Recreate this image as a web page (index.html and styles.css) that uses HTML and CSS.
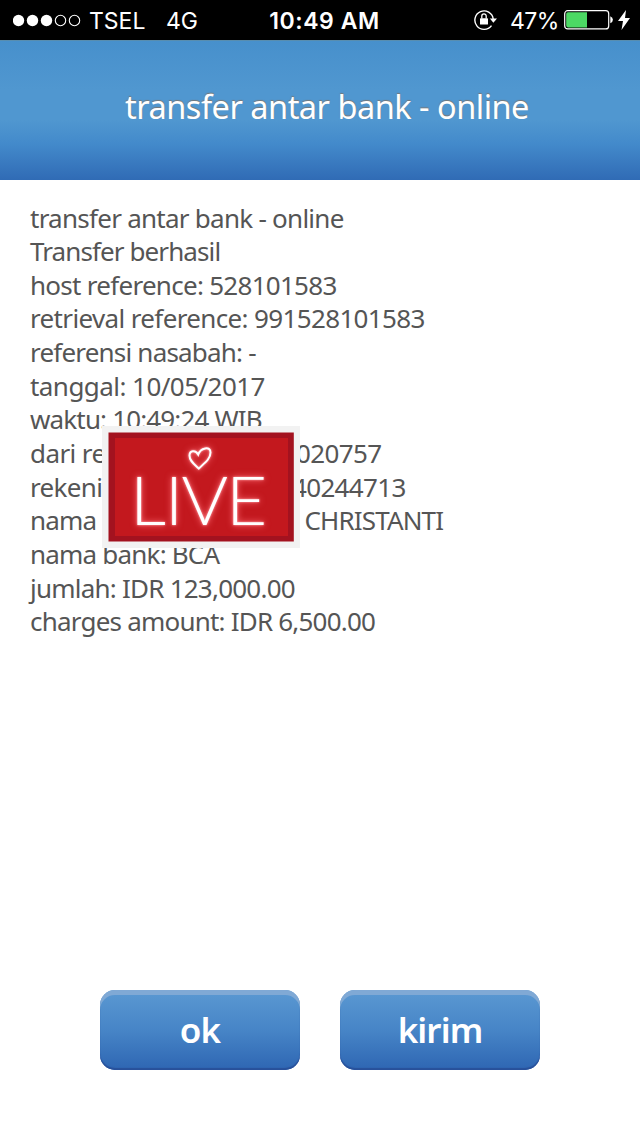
FILE: index.html
```html
<!DOCTYPE html>
<html lang="id">
<head>
<meta charset="utf-8">
<title>transfer antar bank - online</title>
<link rel="stylesheet" href="styles.css">
</head>
<body>
<div class="screen">
  <div class="status">
    <div class="status-left">
      <svg class="signal" width="68" height="14" viewBox="0 0 68 14"><g fill="#fff"><circle cx="5.5" cy="7.5" r="5.7"/><circle cx="19.5" cy="7.5" r="5.7"/><circle cx="33.5" cy="7.5" r="5.7"/></g><g fill="none" stroke="#fff" stroke-width="1.1"><circle cx="47.5" cy="7.5" r="5.2"/><circle cx="61.5" cy="7.5" r="5.2"/></g></svg>
      <span class="carrier">TSEL</span>
      <span class="network">4G</span>
    </div>
    <span class="clock">10:49 AM</span>
    <div class="status-right">
      <svg class="lock" width="24" height="22" viewBox="0 0 24 22"><path d="M17.5 16.6A9.2 9.2 0 1 1 19.2 10" fill="none" stroke="#fff" stroke-width="1.4"/><path d="M15.8 9.5h7.2l-3.6 4.3z" fill="#fff"/><rect x="6" y="9.2" width="8" height="6.3" rx=".6" fill="#fff"/><path d="M7.8 9.5V7a2.2 2.2 0 0 1 4.4 0v2.5" fill="none" stroke="#fff" stroke-width="1.3"/></svg>
      <span class="percent">47%</span>
      <svg class="battery" width="50" height="20" viewBox="0 0 50 20"><rect x=".7" y=".7" width="44" height="18.2" rx="3" fill="none" stroke="#fff" stroke-width="1.2"/><path d="M4 2.2H23V17.4H4A1.8 1.8 0 0 1 2.2 15.6V4A1.8 1.8 0 0 1 4 2.2Z" fill="#4cd964"/><path d="M46.3 6.3q2.6 1 2.6 3.5t-2.6 3.5z" fill="#fff"/></svg>
      <svg class="bolt" width="12" height="20" viewBox="0 0 12 20"><path d="M8 0 0 11h5L3.5 20 12 8H7z" fill="#fff"/></svg>
    </div>
  </div>
  <header class="header"><h1 class="title">transfer antar bank - online</h1></header>
  <main class="details">
    <div class="line l1">transfer antar bank - online</div>
    <div class="line l2">Transfer berhasil</div>
    <div class="line l3">host reference: 528101583</div>
    <div class="line l4">retrieval reference: 991528101583</div>
    <div class="line l5">referensi nasabah: -</div>
    <div class="line l6">tanggal: 10/05/2017</div>
    <div class="line l7">waktu: 10:49:24 WIB</div>
    <div class="line l8"><span class="lead">dari re</span><span class="tail">020757</span></div>
    <div class="line l9"><span class="lead">rekeni</span><span class="tail">40244713</span></div>
    <div class="line l10"><span class="lead">nama</span><span class="tail">CHRISTANTI</span></div>
    <div class="line l11">nama bank: BCA</div>
    <div class="line l12">jumlah: IDR 123,000.00</div>
    <div class="line l13">charges amount: IDR 6,500.00</div>
    <div class="live">
      <svg width="198" height="122" viewBox="102 426 198 122">
        <rect x="108.5" y="432.5" width="185.3" height="109" fill="#a3121f"/>
        <rect x="115" y="438" width="173" height="98" fill="#c3181e"/>
        <g class="neon">
          <path d="M198.8 468.5C194 464 189.5 461 189.5 455.5C189.5 450.5 195.5 449.5 198.2 454.5C200.5 448 210.5 445.5 210.5 452.5C210.5 459 204.5 463 198.8 468.5Z" fill="none" stroke="#fff" stroke-width="2"/>
          <text class="neon-text" x="124.4 157.6 173.8 216.2" y="525.5" transform="scale(1.045 1)">LIVE</text>
        </g>
      </svg>
    </div>
  </main>
  <div class="actions"><button class="btn">ok</button><button class="btn kirim">kirim</button></div>
</div>
</body>
</html>
```
FILE: styles.css
```css
* { box-sizing: border-box; }
body { margin: 0; background: #fff; }
.screen { width: 640px; height: 1136px; display: flex; flex-direction: column; overflow: hidden; background: #fff; font-family: "Noto Sans", sans-serif; }
.status { height: 40px; background: #000; color: #fff; display: grid; grid-template-columns: 260px 129px 1fr; align-items: center; font: 400 23px/40px Inter, sans-serif; white-space: nowrap; }
.status svg { display: block; flex: none; }
.status-left, .status-right { display: flex; align-items: center; }
.status-left { padding-left: 13px; }
.carrier, .network, .percent, .clock { position: relative; top: 1px; }
.carrier { width: 85px; padding-left: 8px; }
.clock { text-align: center; font-weight: 600; letter-spacing: .55px; }
.status-right { padding-left: 85px; }
.percent { width: 54px; margin-left: 12px; letter-spacing: -.6px; }
.lock { width: 24px; }
.battery { margin-left: 0; }
.bolt { margin-left: 4px; }
.header { height: 140px; padding: 44px 0 0 14px; background: linear-gradient(#4790cc 0, #5097d0 35%, #5097d0 57%, #438acb 74%, #306bb5 100%); border-top: 1px solid #588daf; }
.title { margin: 0; text-align: center; color: #fff; font-weight: 400; font-size: 32.5px; line-height: 44px; letter-spacing: -.5px; text-shadow: 0 -1px 1px #777; }
.details { position: relative; height: 810px; padding: 21.5px 30px 0; color: #555; font-size: 26px; line-height: 33.65px; white-space: nowrap; }
.line { display: flex; height: 33.65px; }
.l1 { letter-spacing: -.74px; }
.l2 { letter-spacing: -.9px; }
.l3 { letter-spacing: -.72px; }
.l4 { letter-spacing: -.64px; }
.l5 { letter-spacing: -.8px; }
.l6 { letter-spacing: -.55px; }
.l7 { letter-spacing: -.85px; }
.l8 { letter-spacing: -.6px; }
.l9 { letter-spacing: -.67px; }
.l10 { letter-spacing: -.86px; }
.l11 { letter-spacing: -.8px; }
.l12 { letter-spacing: -.77px; }
.l13 { letter-spacing: -.79px; }
.lead { width: 70px; flex: none; }
.tail { margin-left: 196px; }
.l9 .tail { margin-left: 192px; }
.l10 .tail { margin-left: 204.5px; }
.live { position: absolute; left: 102px; top: 246px; width: 198px; height: 122px; background: #f2f2f2; }
.live svg { display: block; }
.neon { filter: drop-shadow(0 0 1px #ffa4aa) drop-shadow(0 0 3px #f8636c); }
.neon-text { font-family: Lato, sans-serif; font-weight: 300; font-size: 68px; fill: #fff; }
.actions { display: flex; gap: 40px; padding-left: 100px; }
.btn { width: 200px; height: 80px; padding: 0; border: 0; border-radius: 15px; color: #fff; font: 600 35px/78px "Noto Sans", sans-serif; letter-spacing: -.9px; background: linear-gradient(#5b99d2, #4785c7 50%, #2e66b3); box-shadow: inset 0 5px 0 #80a9d5, inset 0 -2px 1px #28509a; }
```
